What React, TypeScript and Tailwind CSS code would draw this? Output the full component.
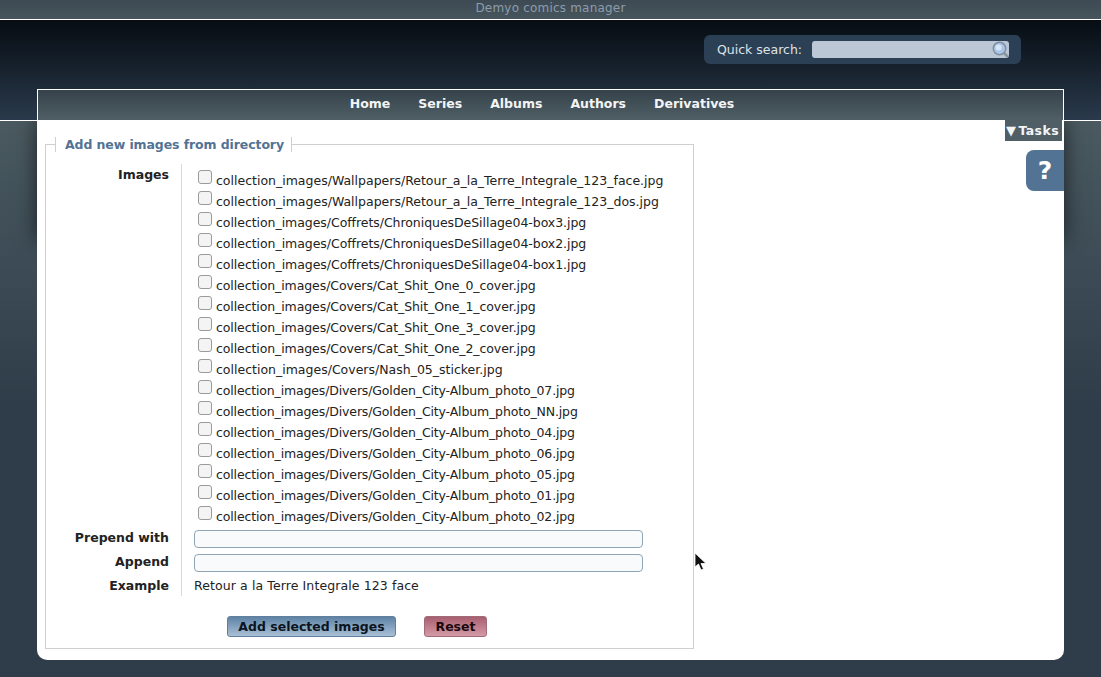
import React from 'react';

const navItems = ['Home', 'Series', 'Albums', 'Authors', 'Derivatives'];

const wallpapers = 'tracking-normal';
const coffrets = 'tracking-[-0.05px]';
const covers = 'tracking-[-0.09px]';
const divers = 'tracking-[-0.145px]';

const images = [
  { path: 'collection_images/Wallpapers/Retour_a_la_Terre_Integrale_123_face.jpg', spacing: wallpapers },
  { path: 'collection_images/Wallpapers/Retour_a_la_Terre_Integrale_123_dos.jpg', spacing: wallpapers },
  { path: 'collection_images/Coffrets/ChroniquesDeSillage04-box3.jpg', spacing: coffrets },
  { path: 'collection_images/Coffrets/ChroniquesDeSillage04-box2.jpg', spacing: coffrets },
  { path: 'collection_images/Coffrets/ChroniquesDeSillage04-box1.jpg', spacing: coffrets },
  { path: 'collection_images/Covers/Cat_Shit_One_0_cover.jpg', spacing: covers },
  { path: 'collection_images/Covers/Cat_Shit_One_1_cover.jpg', spacing: covers },
  { path: 'collection_images/Covers/Cat_Shit_One_3_cover.jpg', spacing: covers },
  { path: 'collection_images/Covers/Cat_Shit_One_2_cover.jpg', spacing: covers },
  { path: 'collection_images/Covers/Nash_05_sticker.jpg', spacing: wallpapers },
  { path: 'collection_images/Divers/Golden_City-Album_photo_07.jpg', spacing: divers },
  { path: 'collection_images/Divers/Golden_City-Album_photo_NN.jpg', spacing: divers },
  { path: 'collection_images/Divers/Golden_City-Album_photo_04.jpg', spacing: divers },
  { path: 'collection_images/Divers/Golden_City-Album_photo_06.jpg', spacing: divers },
  { path: 'collection_images/Divers/Golden_City-Album_photo_05.jpg', spacing: divers },
  { path: 'collection_images/Divers/Golden_City-Album_photo_01.jpg', spacing: divers },
  { path: 'collection_images/Divers/Golden_City-Album_photo_02.jpg', spacing: divers },
];

const App: React.FC = () => {
  return (
    <div className="relative isolate h-[677px] w-[1101px] overflow-hidden bg-gradient-to-b from-[#4a5a60] from-[18%] to-[#2f3d4a] to-[60%] font-['DejaVu_Sans',sans-serif] text-[12.5px] text-[#222]">
      {/* Title bar */}
      <div className="h-[20px] border-b border-white bg-gradient-to-b from-[#3d4a53] to-[#47555c] text-center text-[12px] leading-[16px] tracking-[0.2px] text-[#8d9cab]">
        Demyo comics manager
      </div>

      {/* Header band */}
      <div className="flex h-[101px] justify-end border-b border-white bg-gradient-to-b from-[#070d13] to-[#2a3a4c] pr-[80px] pt-[15px]">
        <div className="flex h-[29px] w-[317px] items-center rounded-[6px] bg-[#2b3f55] pl-[13px] text-[#dfe4e8]">
          <span className="w-[95px] pt-[1px]">Quick search:</span>
          <div className="relative h-[17px] w-[197px] rounded-[3px] bg-[#bcc7d6]">
            <svg className="absolute right-0 top-0" width="17" height="17" viewBox="0 0 17 17">
              <circle cx="7.5" cy="7.5" r="6.2" fill="#a9c6e8" stroke="#7f8f9f" strokeWidth="1.5" />
              <circle cx="6.5" cy="6.5" r="3" fill="#d6e6f6" />
              <path d="M12 12l4 4" stroke="#8a949c" strokeWidth="2.5" />
            </svg>
          </div>
        </div>
      </div>

      {/* Main panel */}
      <div className="relative mx-[37px] -mt-[32px] h-[571px] w-[1027px] rounded-b-[10px] bg-white">
        {/* Side shadow, only along the top of the panel */}
        <div className="absolute inset-x-0 top-[31px] -z-10 h-[120px] shadow-[0_0_20px_rgba(0,0,0,0.6)]" />

        <nav className="flex h-[31px] items-center justify-center gap-[28px] border-l border-t border-r border-white bg-gradient-to-b from-[#35424b] to-[#505f65] pb-[2px] pr-[17px] font-bold text-[#f2f4f5]">
          {navItems.map((item) => (
            <span key={item}>{item}</span>
          ))}
        </nav>

        <div className="absolute right-[2px] top-[31px] flex h-[21px] w-[57px] items-center justify-end gap-[2px] whitespace-nowrap bg-[#505f65] pr-[3px] pt-[1px] font-bold tracking-[0.4px] text-[#f2f4f5]">
          <span className="text-[13px]">▼</span>Tasks
        </div>
        <div className="absolute right-0 top-[61px] flex h-[41px] w-[38px] items-center justify-center rounded-l-[8px] bg-[#527394] text-[25px] font-bold text-white">
          ?
        </div>

        <fieldset className="ml-[8px] mt-[17px] h-[512px] w-[649px] border border-[#cfcfcf]">
          <legend className="ml-[9px] border-x border-[#cfcfcf] pl-[9px] pr-[7px] font-bold leading-[15px] tracking-[-0.1px] text-[#527394]">
            Add new images from directory
          </legend>

          <div className="mt-[12px] grid grid-cols-[136px_1fr]">
            <div className="flex flex-col border-r border-[#d8d8d8] pr-[12px] text-right font-bold">
              <div className="h-[366px] pt-[3px] leading-[16px]">Images</div>
              <div className="h-[24px] leading-[16px]">Prepend with</div>
              <div className="h-[24px] leading-[16px]">Append</div>
              <div className="h-[18px] leading-[16px]">Example</div>
            </div>
            <div className="pl-[12px]">
              <div className="h-[366px] pl-[4px]">
                {images.map((img) => (
                  <label key={img.path} className="flex h-[21px] whitespace-nowrap">
                    <input
                      type="checkbox"
                      className="mt-[6px] h-[14px] w-[14px] appearance-none rounded-[3px] border border-[#9a9a9a] bg-[#f4f4f4]"
                    />
                    <span className={`ml-[4px] pt-[9px] leading-[16px] ${img.spacing}`}>{img.path}</span>
                  </label>
                ))}
              </div>
              <input className="block h-[18px] w-[449px] rounded-[4px] border border-[#8fa5b5] bg-[#f8fafb]" />
              <input className="mt-[6px] block h-[18px] w-[449px] rounded-[4px] border border-[#8fa5b5] bg-[#f8fafb]" />
              <div className="mt-[6px] leading-[16px] tracking-[0.1px]">Retour a la Terre Integrale 123 face</div>
            </div>
          </div>

          <div className="ml-[181px] mt-[20px] flex gap-[28px] font-bold">
            <button className="h-[21px] w-[169px] rounded-[3px] border border-[#5f7f9c] bg-gradient-to-b from-[#5f83a6] to-[#a9c0d6] pt-[1px] text-[#0b1420]">
              Add selected images
            </button>
            <button className="h-[21px] w-[63px] rounded-[3px] border border-[#a06a78] bg-gradient-to-b from-[#a85f70] to-[#d49aa6] pt-[1px] text-[#1a0a0e]">
              Reset
            </button>
          </div>
        </fieldset>
      </div>

      {/* Mouse cursor */}
      <svg className="absolute left-[694px] top-[552px]" width="14" height="20" viewBox="0 0 14 20">
        <path d="M1 1v14l3.5-3 2.5 6 2.5-1-2.5-5.5H12z" fill="#111" stroke="#fff" strokeWidth="0.8" />
      </svg>
    </div>
  );
};

export default App;
